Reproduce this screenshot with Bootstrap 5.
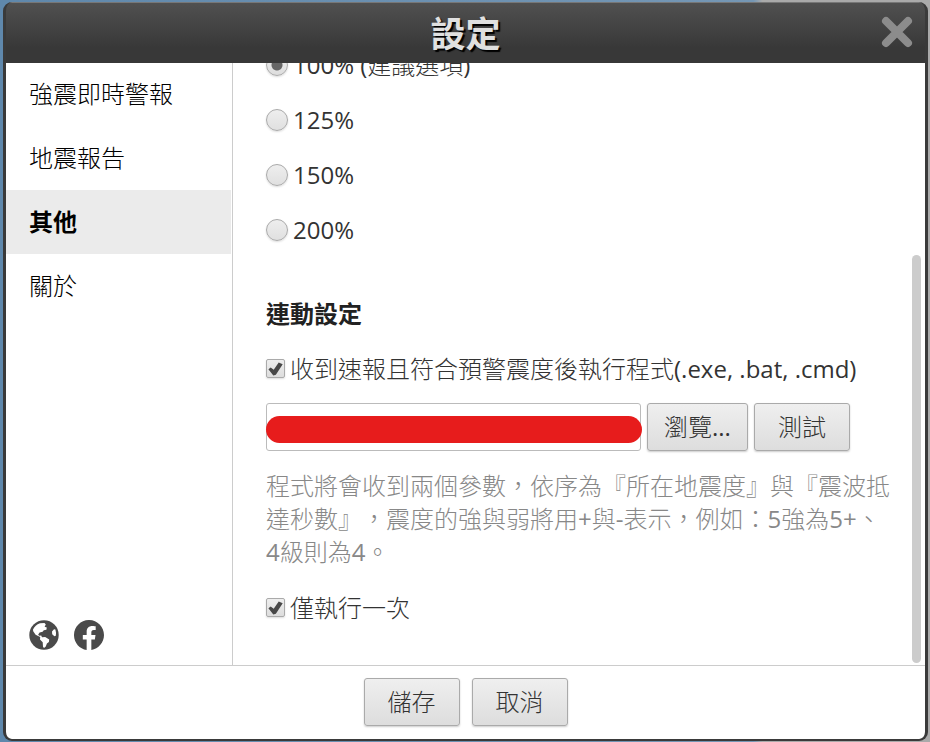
<!DOCTYPE html>
<html lang="zh-Hant">
<head>
<meta charset="utf-8">
<meta name="viewport" content="width=device-width, initial-scale=1">
<title>設定</title>
<link href="https://cdn.jsdelivr.net/npm/bootstrap@5.3.0/dist/css/bootstrap.min.css" rel="stylesheet">
<style>
body{font-family:"Open Sans","Noto Sans CJK TC",sans-serif;font-size:24px;line-height:33px;color:#333;text-spacing-trim:space-all;background:linear-gradient(90deg,#5f88ac 0,#5f88ac 10px,#7597b5 81%,#aaa 82%,#aaa 100%)}
.thin{font-weight:300}
.latin{font-weight:400}
.dialog-shell{margin:2px 2px 1px 3px;height:calc(100vh - 3px);border-radius:9px;border:3px solid #3a3a3a;border-top:0;border-bottom-width:2px;overflow:hidden;background:#3a3a3a}
.title-bar{height:61px;background:linear-gradient(#505050,#383838 75%);border-top:1px solid #777}
.title-bar h1{font-size:35px;line-height:62px;font-weight:700;color:#e0e0e0;text-shadow:2px 2px 1px #000}
.close-btn{right:10px;top:11px;width:36px;height:36px}
.side{width:227px;border-right:1px solid #ccc}
.side .nav-link{color:#000;padding:15px 23px 16px;border-radius:0;margin-right:1px}
.side .nav-link:first-child{padding-top:14px}
.side .nav-link.active{background:#ebebeb;color:#000;font-weight:700}
.social{padding:0 23px 15px;gap:15px}
.social a,.social svg{display:block;width:30px;height:30px}
.panel{padding:0 20px 41px 33px}
.opt{gap:5px;height:33px}
.opt-list{gap:22px}
.opt input[type=radio]{appearance:none;width:22px;height:22px;border:1px solid #aaa;border-radius:50%;background:linear-gradient(#eee,#e0e0e0);box-shadow:0 1px 2px #ddd;margin:0}
.opt input[type=radio]:checked{background:radial-gradient(circle,#666 5px,transparent 6px),linear-gradient(#eee,#ddd)}
.opt input[type=checkbox]{appearance:none;width:19px;height:19px;border:1px solid #aaa;border-radius:2px;margin:0;background:url("data:image/svg+xml,%3Csvg xmlns='http://www.w3.org/2000/svg' viewBox='0 0 17 17'%3E%3Cpath d='M1.4 9.2l2.3-1.6 3 2.2 5-7.2 4 1.6-6.8 10.6-2.6.6z' fill='%23484848'/%3E%3C/svg%3E"),linear-gradient(#eee,#ddd);box-shadow:0 1px 2px #ddd}
.group-title{font-size:24px;line-height:33px;font-weight:700;margin:51px 0 22px;color:#222}
.path-row{gap:6px;margin:18px 0}
.path-box{width:375px}
.path-box input{height:48px;border:1px solid #bbb;border-radius:3px}
.redaction{left:0;right:-1px;top:13px;height:27px;border-radius:14px;background:#e71c1c}
.btn-soft{height:48px;min-width:96px;padding:0 16px;font-size:24px;line-height:44px;color:#333;border:1px solid #aaa;border-radius:3px;background:linear-gradient(#efefef,#ddd);box-shadow:0 1px 2px #ccc}
.hint{color:#888;margin-bottom:23px}
.scroll-track{width:13px;padding:0 4px 2px 0}
.scroll-thumb{height:68%;border-radius:5px;background:#ccc}
.foot{height:74px;border-top:1px solid #ccc;gap:12px;padding-top:12px;border-radius:0 0 5px 5px}
</style>
<script src="https://cdn.jsdelivr.net/npm/bootstrap@5.3.0/dist/js/bootstrap.bundle.min.js"></script>
</head>
<body class="overflow-hidden">
<div class="dialog-shell d-flex flex-column" role="dialog" aria-labelledby="dialog-title">
  <header class="title-bar position-relative flex-shrink-0 text-center">
    <h1 id="dialog-title" class="m-0">設定</h1>
    <button type="button" class="close-btn btn p-0 border-0 position-absolute d-flex" aria-label="關閉"><svg viewBox="0 0 36 36" width="36" height="36"><path d="M7 7l22 22M29 7L7 29" stroke="#8c8c8c" stroke-width="8" stroke-linecap="round"/></svg></button>
  </header>
  <main class="d-flex flex-grow-1 bg-white overflow-hidden">
    <nav class="side d-flex flex-column flex-shrink-0 thin">
      <div class="nav flex-column">
        <a class="nav-link" href="#">強震即時警報</a>
        <a class="nav-link" href="#">地震報告</a>
        <a class="nav-link active" href="#">其他</a>
        <a class="nav-link" href="#">關於</a>
      </div>
      <div class="social d-flex mt-auto">
        <a href="#" aria-label="網站"><svg viewBox="0 0 30 30"><circle cx="15" cy="15" r="14.7" fill="#4a4a4a"/><path fill="#fff" d="M4 9.5Q6 5 11 3.2L15.5 3l1.3 1.6-1.2 2.2 2.2.8-.4 2.2-2.6.4-1.2 1.6-3 .8-1.4 2 .8 1.2 2.2-.2.8 1.6 3.2-.2 4 2.4-.3 2.6-2 1.4-1.1 3-1.8 1.6-1-1.2-.3-4.6-2.7-2.8.2-2.4-4.6-2.2-2.4-3.6zM23 11.6l2-2.4 1.4.4q1 3.2.4 6.2l-1.4.4-2.2-2z"/></svg></a>
        <a href="#" aria-label="Facebook"><svg viewBox="0 0 16 16"><path fill="#4a4a4a" d="M16 8.049c0-4.446-3.582-8.05-8-8.05C3.58 0-.002 3.603-.002 8.05c0 4.017 2.926 7.347 6.75 7.951v-5.625H4.7V8.05h2.05V6.275c0-2.017 1.195-3.131 3.022-3.131.876 0 1.791.157 1.791.157v1.98h-1.009c-.993 0-1.303.621-1.303 1.258v1.51h2.218l-.354 2.326H9.25V16c3.824-.604 6.75-3.934 6.75-7.951"/></svg></a>
      </div>
    </nav>
    <section class="panel flex-grow-1 d-flex flex-column justify-content-end thin">
      <div class="opt-list d-flex flex-column latin">
        <label class="opt d-flex align-items-center"><input type="radio" name="zoom" checked><span>100% (<span class="thin">建議選項</span>)</span></label>
        <label class="opt d-flex align-items-center"><input type="radio" name="zoom"><span>125%</span></label>
        <label class="opt d-flex align-items-center"><input type="radio" name="zoom"><span>150%</span></label>
        <label class="opt d-flex align-items-center"><input type="radio" name="zoom"><span>200%</span></label>
      </div>
      <h2 class="group-title">連動設定</h2>
      <label class="opt d-flex align-items-center"><input type="checkbox" checked><span>收到速報且符合預警震度後執行程式<span class="latin">(.exe, .bat, .cmd)</span></span></label>
      <div class="path-row d-flex">
        <div class="path-box position-relative"><input type="text" class="form-control" aria-label="程式路徑"><div class="redaction position-absolute"></div></div>
        <button type="button" class="btn btn-soft thin">瀏覽<span class="latin">...</span></button>
        <button type="button" class="btn btn-soft thin">測試</button>
      </div>
      <p class="hint">程式將會收到兩個參數，依序為『所在地震度』與『震波抵達秒數』，震度的強與弱將用<span class="latin">+</span>與<span class="latin">-</span>表示，例如：<span class="latin">5</span>強為<span class="latin">5+</span>、<br><span class="latin">4</span>級則為<span class="latin">4</span>。</p>
      <label class="opt d-flex align-items-center"><input type="checkbox" checked><span>僅執行一次</span></label>
    </section>
    <div class="scroll-track d-flex flex-column justify-content-end flex-shrink-0"><div class="scroll-thumb"></div></div>
  </main>
  <footer class="foot bg-white d-flex justify-content-center align-items-start flex-shrink-0">
    <button type="button" class="btn btn-soft thin">儲存</button>
    <button type="button" class="btn btn-soft thin">取消</button>
  </footer>
</div>
</body>
</html>
